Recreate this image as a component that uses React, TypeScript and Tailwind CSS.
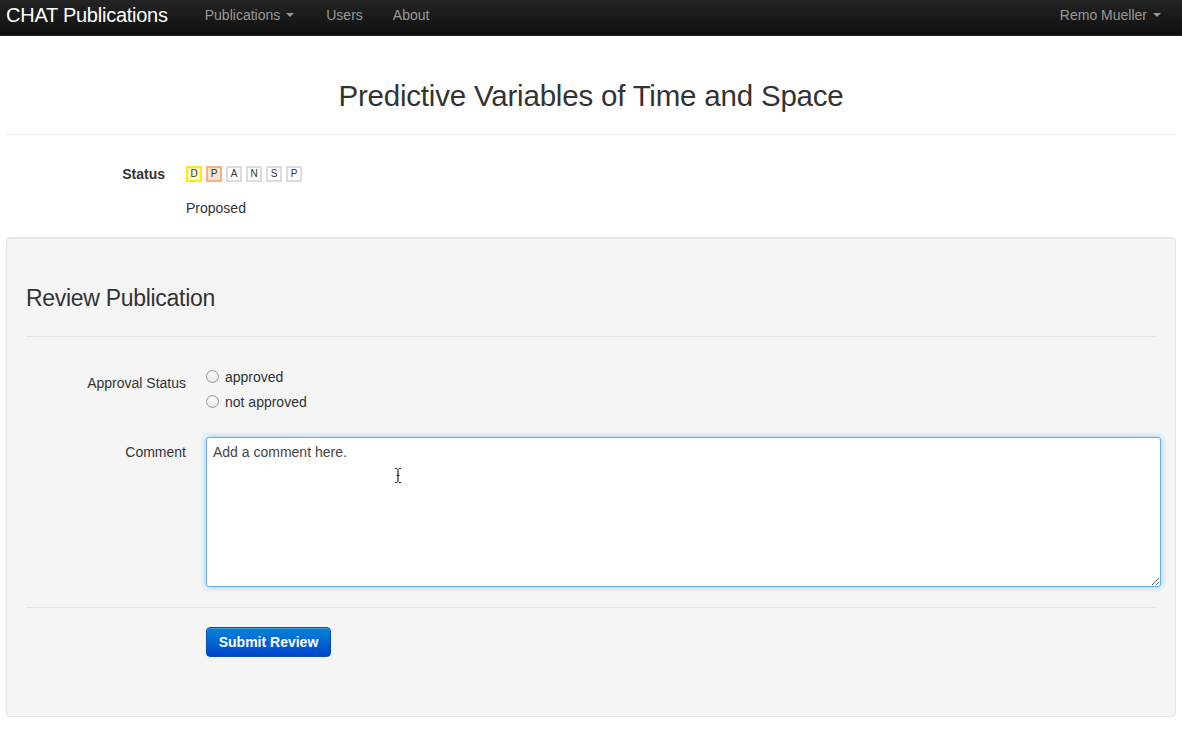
const statusSteps = [
  { letter: "D", cls: "border-[#ffe81a] bg-[#fffbc4]" },
  { letter: "P", cls: "border-[#f7b07e] bg-[#fde2cf]" },
  { letter: "A", cls: "border-[#dcdcdc] bg-white" },
  { letter: "N", cls: "border-[#dcdcdc] bg-white" },
  { letter: "S", cls: "border-[#dcdcdc] bg-white" },
  { letter: "P", cls: "border-[#dcdcdc] bg-white" },
];

function Caret() {
  return (
    <span className="ml-[6px] mt-[1px] inline-block h-0 w-0 border-x-[4px] border-t-[4px] border-x-transparent border-t-[#999]" />
  );
}

function Radio({ label }: { label: string }) {
  return (
    <label className="flex h-[25px] items-center gap-[6px]">
      <span className="h-[13px] w-[13px] rounded-full border border-[#9a9a9a] bg-gradient-to-b from-white to-[#e4e4e4] shadow-[inset_0_1px_1px_rgba(0,0,0,0.08)]" />
      <span>{label}</span>
    </label>
  );
}

export default function App() {
  return (
    <div
      className="min-h-screen bg-white text-[14px] leading-[20px] text-[#333]"
      style={{ fontFamily: '"Liberation Sans", Arial, sans-serif' }}
    >
      {/* Navbar */}
      <div className="flex h-[36px] items-center border-b border-[#252525] bg-gradient-to-b from-[#242424] to-[#0f0f0f] pb-[6px] pl-[6px] pr-[21px]">
        <span className="text-[20px] tracking-[-0.25px] text-white">CHAT Publications</span>
        <nav className="ml-[37px] flex items-center text-[#999]">
          <span className="flex items-center">
            Publications
            <Caret />
          </span>
          <span className="ml-[32px]">Users</span>
          <span className="ml-[30px]">About</span>
        </nav>
        <span className="ml-auto flex items-center text-[#999]">
          Remo Mueller
          <Caret />
        </span>
      </div>

      <div className="mx-auto w-[1170px]">
        {/* Page header */}
        <div className="border-b border-[#eee] pb-[16px] pt-[38px] text-center">
          <h1 className="text-[29.5px] leading-[44px] tracking-[-0.2px] text-[#333]">
            Predictive Variables of Time and Space
          </h1>
        </div>

        {/* Status */}
        <div className="mt-[29px] flex">
          <div className="w-[160px] shrink-0 pr-[1px] text-right font-bold text-[#333]">Status</div>
          <div className="ml-[20px]">
            <div className="flex gap-[4px] pt-[2px]">
              {statusSteps.map((s, i) => (
                <span
                  key={i}
                  className={`flex h-[16px] w-[16px] items-center justify-center border-2 text-[10px] leading-none text-[#333] ${s.cls}`}
                >
                  {s.letter}
                </span>
              ))}
            </div>
            <div className="mt-[16px]">Proposed</div>
          </div>
        </div>

        {/* Review well */}
        <div className="relative mt-[19px] h-[480px] rounded-[4px] border border-[#e3e3e3] bg-[#f5f5f5] px-[19px] shadow-[inset_0_1px_1px_rgba(0,0,0,0.05)]">
          <h2 className="pt-[45px] text-[23px] leading-[30px] tracking-[-0.3px] text-[#333]">
            Review Publication
          </h2>
          <div className="mt-[23px] border-t border-[#e6e6e6]" />

          {/* Approval status */}
          <div className="mt-[29px] flex">
            <div className="w-[160px] shrink-0 pt-[7px] text-right">Approval Status</div>
            <div className="ml-[20px] -mt-[2px]">
              <Radio label="approved" />
              <Radio label="not approved" />
            </div>
          </div>

          {/* Comment */}
          <div className="mt-[23px] flex">
            <div className="w-[160px] shrink-0 pt-[5px] text-right">Comment</div>
            <div className="ml-[20px] flex-1">
              <textarea
                defaultValue=""
                placeholder="Add a comment here."
                className="block h-[150px] w-[955px] resize rounded-[3px] border border-[#66afe9] bg-white px-[6px] py-[4px] text-[14px] leading-[20px] text-[#333] shadow-[0_0_6px_rgba(82,168,236,0.6)] outline-none placeholder:text-[#444]"
                style={{ fontFamily: '"Liberation Sans", Arial, sans-serif' }}
              />
            </div>
          </div>

          <div className="mt-[20px] border-t border-[#e6e6e6]" />

          <div className="ml-[180px] mt-[19px]">
            <button
              type="button"
              className="h-[30px] w-[125px] rounded-[4px] border border-[#0b4fb3] bg-gradient-to-b from-[#0a84d6] to-[#0044cc] text-[14px] font-bold text-white shadow-[inset_0_1px_0_rgba(255,255,255,0.2)]"
            >
              Submit Review
            </button>
          </div>

          {/* text cursor */}
          <svg
            className="absolute left-[386px] top-[229px]"
            width="10"
            height="17"
            viewBox="0 0 10 17"
          >
            <path
              d="M2 1.5h2.2M5.8 1.5H8M5 2v13M2 15.5h2.2M5.8 15.5H8M3.5 8.5h3"
              stroke="#222"
              strokeWidth="1.2"
              fill="none"
            />
          </svg>
        </div>
      </div>
    </div>
  );
}
